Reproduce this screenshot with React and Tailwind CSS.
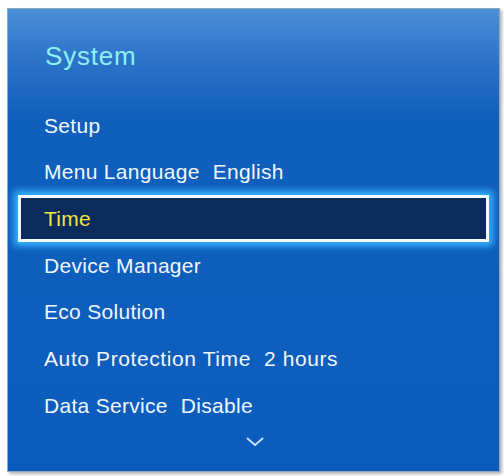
import React from "react";

const rows = [
  { label: "Setup" },
  { label: "Menu Language", value: "English" },
  { label: "Time", active: true },
  { label: "Device Manager" },
  { label: "Eco Solution" },
  { label: "Auto Protection Time", value: "2 hours", wide: true },
  { label: "Data Service", value: "Disable" },
];

export default function App() {
  return (
    <div className="w-[504px] h-[476px] bg-white pt-[8px] pl-[7px]" style={{ fontFamily: '"Liberation Sans", Arial, sans-serif' }}>
      <div className="w-[493px] h-[464px] border border-[#8ea7c3] shadow-[2px_2px_3px_rgba(0,0,0,0.3)] bg-[linear-gradient(to_bottom,#4a8fd6_0%,#2a71c8_12%,#105fbc_24%,#0b5dbd_100%)] flex flex-col">
        <div className="pt-[32px] pl-[37px] h-[63px] text-[26px] leading-[30px] text-[#8ef0f2] tracking-[0.8px]">System</div>
        <div className="mt-[30px] flex flex-col">
          {rows.map((r) => (
            <div
              key={r.label}
              className={
                r.active
                  ? "mx-[10px] h-[46.67px] border-[3px] border-[#f4fbff] bg-[#0c2b5d] shadow-[0_0_7px_4px_#38b6ff] pl-[23px] flex items-center text-[21px] text-[#f1e640] tracking-[0.3px]"
                  : r.wide
                  ? "mx-[10px] h-[46.67px] border-[3px] border-transparent pl-[23px] flex items-center text-[21px] text-[#f2f7ff] tracking-[0.6px]"
                  : "mx-[10px] h-[46.67px] border-[3px] border-transparent pl-[23px] flex items-center text-[21px] text-[#f2f7ff] tracking-[0.3px]"
              }
            >
              <span>{r.label}</span>
              {r.value && <span className="ml-[13px]">{r.value}</span>}
            </div>
          ))}
        </div>
        <div className="flex justify-center mt-[8px]">
          <svg width="18" height="10" viewBox="0 0 18 10" fill="none" className="ml-[2px]">
            <path d="M1.5 1.5 L9 8 L16.5 1.5" stroke="#cfe2ff" strokeWidth="1.8" strokeLinecap="round" strokeLinejoin="round" />
          </svg>
        </div>
      </div>
    </div>
  );
}
